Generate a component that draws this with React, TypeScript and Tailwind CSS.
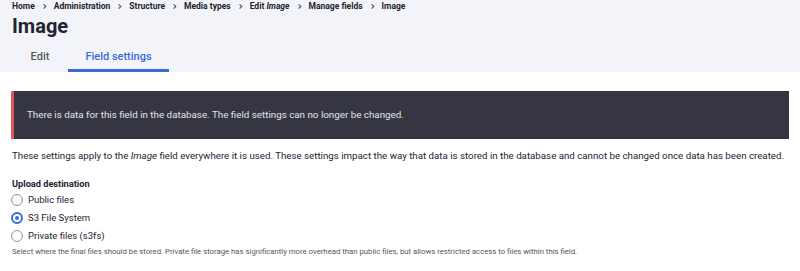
const crumbs = ["Home", "Administration", "Structure", "Media types", "Edit", "Manage fields", "Image"];

function Chevron() {
  return (
    <svg viewBox="0 0 8 8" className="mx-[6px] h-[7px] w-[7px] text-[#55565b]">
      <path d="M3 1.5 5.5 4 3 6.5" fill="none" stroke="currentColor" strokeWidth="1.3" />
    </svg>
  );
}

function Crumbs() {
  return (
    <ol className="flex h-[12px] items-center text-[8.5px] font-bold text-[#222330]">
      {crumbs.map((c, i) => (
        <li key={c} className="flex items-center">
          {i > 0 && <Chevron />}
          {c === "Edit" ? (
            <span>
              Edit <em>Image</em>
            </span>
          ) : (
            c
          )}
        </li>
      ))}
    </ol>
  );
}

function Radio({ label, checked }: { label: string; checked?: boolean }) {
  return (
    <label className="flex h-[18px] items-center gap-[5px]">
      <span
        className={
          checked
            ? "flex h-[12px] w-[12px] items-center justify-center rounded-full border-2 border-[#3b6ad6] bg-white"
            : "h-[12px] w-[12px] rounded-full border border-[#8e929c] bg-white"
        }
      >
        {checked && <span className="h-[4px] w-[4px] rounded-full bg-[#3b6ad6]" />}
      </span>
      <span className="text-[9.5px] text-[#222330]">{label}</span>
    </label>
  );
}

export default function App() {
  return (
    <div className="h-[271px] w-[800px] overflow-hidden bg-white font-['Roboto',sans-serif] text-[#222330]">
      <header className="h-[72px] bg-[#f3f4f9] px-3">
        <Crumbs />
        <h1 className="h-[27px] text-[20px] leading-[28px] font-bold">Image</h1>
        <nav className="mt-[3px] flex text-[11px] font-medium">
          <a className="flex h-[30px] w-[56px] items-center justify-center text-[#55565b]">Edit</a>
          <a className="flex h-[30px] w-[101px] items-center justify-center border-b-[3px] border-[#3b6ad6] pt-[3px] text-[#3b6ad6]">
            Field settings
          </a>
        </nav>
      </header>

      <div className="px-[11px] pt-[19px]">
        <div className="flex h-[48px] items-center border-l-[3px] border-[#e25757] bg-[#353641] pl-[13px] text-[9.8px] text-[#e3e4ea]">
          There is data for this field in the database. The field settings can no longer be changed.
        </div>
      </div>

      <p className="mt-[9px] h-[16px] px-3 text-[9.72px] leading-[16px] whitespace-nowrap">
        These settings apply to the <em>Image</em> field everywhere it is used. These settings impact the way that data is
        stored in the database and cannot be changed once data has been created.
      </p>

      <div className="mt-[13px] px-[11px]">
        <div className="h-[14px] px-[1px] text-[9.2px] leading-[14px] font-bold">Upload destination</div>
        <Radio label="Public files" />
        <Radio label="S3 File System" checked />
        <Radio label="Private files (s3fs)" />
        <p className="h-[14px] px-[1px] text-[7.75px] leading-[14px] whitespace-nowrap text-[#55565b]">
          Select where the final files should be stored. Private file storage has significantly more overhead than public
          files, but allows restricted access to files within this field.
        </p>
      </div>
    </div>
  );
}
